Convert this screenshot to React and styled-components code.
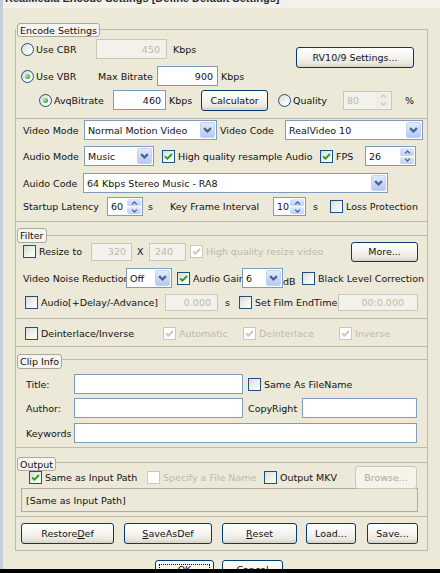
import styled, { createGlobalStyle, css } from "styled-components";

const LINE = "#bdbaa9";
const OFF_TEXT = "#bdbaaa";

const GlobalStyle = createGlobalStyle`
  html, body { margin: 0; padding: 0; background: #ece9d8; }
`;

const Window = styled.div`
  width: 440px;
  height: 573px;
  overflow: hidden;
  box-sizing: border-box;
  padding-left: 3px;
  background: linear-gradient(90deg, #c4cedb 0 3px, #ece9d8 3px);
  font-family: "DejaVu Sans", "Liberation Sans", sans-serif;
  font-size: 9.5px;
  color: #111;
`;

const TitleStrip = styled.div`
  height: 8px;
  overflow: hidden;
  padding-left: 2px;
  background: #f2f1ec;
`;

const TitleText = styled.div`
  margin-top: -8px;
  font-family: "Liberation Sans", Arial, sans-serif;
  font-weight: 700;
  font-size: 11px;
  line-height: 12px;
  color: #2b2b2b;
  white-space: nowrap;
`;

const Frame = styled.div`
  width: 413px;
  margin: 21px 0 0 12px;
  box-sizing: border-box;
  border: 1px solid ${LINE};
  border-top: none;
  display: flex;
  flex-direction: column;
`;

const Section = styled.div`
  display: flex;
  flex-direction: column;
  padding-bottom: ${(p) => p.$pb || 0}px;
  border-bottom: ${(p) => (p.$last ? "none" : `1px solid ${LINE}`)};
`;

const LegendRow = styled.div`
  display: flex;
  align-items: flex-start;
  margin-top: ${(p) => p.$mt}px;
`;

const LegendBox = styled.div`
  flex: none;
  height: ${(p) => p.$h || 15}px;
  box-sizing: border-box;
  margin-left: 1px;
  padding: 0 2px;
  display: flex;
  align-items: center;
  border: 1px solid #a9a89c;
  border-radius: 3px;
  background: #f5f4ef;
  white-space: nowrap;
`;

const Rule = styled.div`
  flex: 1;
  height: 1px;
  margin-top: ${(p) => p.$at}px;
  background: ${LINE};
`;

const Row = styled.div`
  display: flex;
  align-items: center;
  height: ${(p) => p.$h || 20}px;
  margin-top: ${(p) => p.$mt || 0}px;
  padding-left: ${(p) => p.$pl || 0}px;
`;

const RateBlock = styled.div`
  display: flex;
  align-items: flex-start;
  margin-top: 2px;
`;

const RateRows = styled.div`
  display: flex;
  flex-direction: column;
`;

const Label = styled.span`
  flex: none;
  width: ${(p) => (p.$w ? `${p.$w}px` : "auto")};
  margin-left: ${(p) => p.$ml || 0}px;
  white-space: nowrap;
  overflow: ${(p) => (p.$clip ? "hidden" : "visible")};
  color: ${(p) => (p.$off ? OFF_TEXT : "#111")};
  align-self: ${(p) => (p.$low ? "flex-end" : "auto")};
  padding-bottom: ${(p) => (p.$low ? 1 : 0)}px;
`;

const OptionWrap = styled.div`
  flex: none;
  display: flex;
  align-items: center;
  gap: 2px;
  width: ${(p) => (p.$w ? `${p.$w}px` : "auto")};
  margin-left: ${(p) => p.$ml || 0}px;
  overflow: ${(p) => (p.$clip ? "hidden" : "visible")};
`;

const RadioDot = styled.span`
  flex: none;
  position: relative;
  width: 13px;
  height: 13px;
  box-sizing: border-box;
  border-radius: 50%;
  border: 1px solid #1c5180;
  background: linear-gradient(135deg, #d8d8d2, #fbfbf9 75%);
  ${(p) =>
    p.$on &&
    css`
      &::after {
        content: "";
        position: absolute;
        left: 3px;
        top: 3px;
        width: 5px;
        height: 5px;
        border-radius: 50%;
        background: radial-gradient(circle at 35% 35%, #b6ecb6, #2ea82e 75%);
      }
    `}
`;

const CheckBox = styled.span`
  flex: none;
  width: 13px;
  height: 13px;
  box-sizing: border-box;
  border: 1px solid ${(p) => (p.$off ? "#cac8bb" : "#1c5180")};
  background: ${(p) =>
    p.$off ? "#fff" : "linear-gradient(135deg, #dcdcd7 0%, #f6f6f3 70%, #fff 100%)"};
  display: flex;
  align-items: center;
  justify-content: center;
`;

const TextBox = styled.div`
  flex: none;
  width: ${(p) => p.$w}px;
  height: ${(p) => p.$h || 20}px;
  margin-left: ${(p) => p.$ml || 0}px;
  box-sizing: border-box;
  border: 1px solid ${(p) => (p.$off ? "#c9c7ba" : "#7f9db9")};
  background: ${(p) => (p.$off ? "#f2f1eb" : "#fff")};
  color: ${(p) => (p.$off ? OFF_TEXT : "#111")};
  display: flex;
  align-items: center;
  justify-content: ${(p) => (p.$right ? "flex-end" : "flex-start")};
  padding: 0 ${(p) => (p.$pad != null ? p.$pad : 4)}px;
  white-space: nowrap;
  overflow: hidden;
`;

const SelectBox = styled.div`
  flex: none;
  width: ${(p) => p.$w}px;
  height: 20px;
  margin-left: ${(p) => p.$ml || 0}px;
  box-sizing: border-box;
  border: 1px solid #7f9db9;
  background: #fff;
  padding: 1px;
  display: flex;
`;

const SelectText = styled.span`
  flex: 1;
  padding-left: 2px;
  display: flex;
  align-items: center;
  white-space: nowrap;
  overflow: hidden;
`;

const DropBtn = styled.span`
  flex: none;
  width: 15px;
  box-sizing: border-box;
  border: 1px solid #c3d1f6;
  border-radius: 2px;
  background: linear-gradient(#e2eafe, #c6d6fb 60%, #b5c8f4);
  display: flex;
  align-items: center;
  justify-content: center;
`;

const SpinBox = styled.div`
  flex: none;
  width: ${(p) => p.$w}px;
  height: ${(p) => p.$h || 19}px;
  margin-left: ${(p) => p.$ml || 0}px;
  box-sizing: border-box;
  border: 1px solid ${(p) => (p.$off ? "#c9c7ba" : "#7f9db9")};
  background: ${(p) => (p.$off ? "#f2f1eb" : "#fff")};
  display: flex;
`;

const SpinValue = styled.span`
  flex: 1;
  padding-left: 3px;
  display: flex;
  align-items: center;
  color: ${(p) => (p.$off ? OFF_TEXT : "#111")};
`;

const SpinBtns = styled.span`
  flex: none;
  width: 14px;
  padding: 1px 1px 1px 0;
  display: flex;
  flex-direction: column;
  gap: 1px;
`;

const SpinBtn = styled.span`
  flex: 1;
  border-radius: 2px;
  background: ${(p) =>
    p.$off ? "#eeede6" : "linear-gradient(#dfe8fe, #bccff8)"};
  display: flex;
  align-items: center;
  justify-content: center;
`;

const Button = styled.div`
  flex: none;
  position: relative;
  width: ${(p) => p.$w}px;
  height: ${(p) => p.$h || 21}px;
  margin-left: ${(p) => (p.$auto ? "auto" : `${p.$ml || 0}px`)};
  margin-top: ${(p) => p.$mt || 0}px;
  margin-right: ${(p) => p.$mr || 0}px;
  box-sizing: border-box;
  border: 1px solid ${(p) => (p.$off ? "#c9c7ba" : "#003c74")};
  border-radius: 3px;
  background: ${(p) =>
    p.$off
      ? "#f5f4ea"
      : "linear-gradient(180deg, #ffffff 0%, #f6f5f0 45%, #ebe8de 80%, #d6d1c4 100%)"};
  color: ${(p) => (p.$off ? "#aca899" : "#111")};
  display: flex;
  align-items: center;
  justify-content: center;
  white-space: nowrap;
  ${(p) =>
    p.$focus &&
    css`
      &::after {
        content: "";
        position: absolute;
        inset: 3px;
        border: 1px dotted #000;
      }
    `}
`;

const PathBox = styled.div`
  width: 397px;
  height: 24px;
  margin: -1px 0 0 5px;
  box-sizing: border-box;
  border: 1px solid #aeaca0;
  padding-left: 4px;
  display: flex;
  align-items: center;
`;

const DialogButtons = styled.div`
  display: flex;
  height: 9px;
  overflow: hidden;
  margin-top: 9px;
  padding-left: 152px;
`;

const BlackBar = styled.div`
  height: 4px;
  margin-left: -3px;
  background: #000;
`;

const Tick = ({ color }) => (
  <svg width="9" height="9" viewBox="0 0 9 9">
    <path d="M1 4.3 L3.4 6.7 L8 2" fill="none" stroke={color} strokeWidth="1.9" />
  </svg>
);

const Chevron = ({ up, color = "#4d6185", w = 8, h = 5, sw = 1.8 }) => (
  <svg width={w} height={h} viewBox="0 0 8 5">
    <path
      d={up ? "M1 4.2 L4 1.2 L7 4.2" : "M1 0.8 L4 3.8 L7 0.8"}
      fill="none"
      stroke={color}
      strokeWidth={sw}
    />
  </svg>
);

function Radio({ w, ml, on, children }) {
  return (
    <OptionWrap $w={w} $ml={ml}>
      <RadioDot $on={on} />
      <Label>{children}</Label>
    </OptionWrap>
  );
}

function Check({ w, ml, on, off, clip, children }) {
  return (
    <OptionWrap $w={w} $ml={ml} $clip={clip}>
      <CheckBox $off={off}>{on && <Tick color={off ? "#cac8bb" : "#21a121"} />}</CheckBox>
      <Label $off={off} $ml={1}>
        {children}
      </Label>
    </OptionWrap>
  );
}

function Select({ w, ml, children }) {
  return (
    <SelectBox $w={w} $ml={ml}>
      <SelectText>{children}</SelectText>
      <DropBtn>
        <Chevron w={9} h={6} sw={2} />
      </DropBtn>
    </SelectBox>
  );
}

function Spin({ w, ml, h, off, children }) {
  const c = off ? "#c9c8c0" : "#4d6185";
  return (
    <SpinBox $w={w} $ml={ml} $h={h} $off={off}>
      <SpinValue $off={off}>{children}</SpinValue>
      <SpinBtns>
        <SpinBtn $off={off}>
          <Chevron up color={c} w={7} h={4} sw={1.6} />
        </SpinBtn>
        <SpinBtn $off={off}>
          <Chevron color={c} w={7} h={4} sw={1.6} />
        </SpinBtn>
      </SpinBtns>
    </SpinBox>
  );
}

export default function App() {
  return (
    <>
      <GlobalStyle />
      <Window>
        <TitleStrip>
          <TitleText>RealMedia Encode Settings [Define Default Settings]</TitleText>
        </TitleStrip>
        <Frame>
          <Section $pb={8}>
            <LegendRow $mt={-6}>
              <LegendBox $h={14}>Encode Settings</LegendBox>
              <Rule $at={6} />
            </LegendRow>
            <RateBlock>
              <RateRows>
                <Row $pl={5}>
                  <Radio w={75}>Use CBR</Radio>
                  <TextBox $w={71} $off $right $pad={6}>450</TextBox>
                  <Label $ml={6}>Kbps</Label>
                </Row>
                <Row $pl={5} $mt={7}>
                  <Radio w={77} on>
                    Use VBR
                  </Radio>
                  <Label $w={59}>Max Bitrate</Label>
                  <TextBox $w={61} $right>900</TextBox>
                  <Label $ml={3}>Kbps</Label>
                </Row>
              </RateRows>
              <Button $w={118} $auto $mt={8} $mr={13}>
                RV10/9 Settings...
              </Button>
            </RateBlock>
            <Row $pl={23} $mt={4}>
              <Radio w={74} on>
                AvqBitrate
              </Radio>
              <TextBox $w={53} $right>460</TextBox>
              <Label $ml={3} $w={32}>Kbps</Label>
              <Button $w={67}>Calculator</Button>
              <Radio w={65} ml={10}>
                Quality
              </Radio>
              <Spin w={49} off>
                80
              </Spin>
              <Label $ml={13}>%</Label>
            </Row>
          </Section>

          <Section $pb={5}>
            <Row $pl={7} $mt={1}>
              <Label $w={61}>Video Mode</Label>
              <Select w={133}>Normal Motion Video</Select>
              <Label $ml={3} $w={65}>Video Code</Label>
              <Select w={138}>RealVideo 10</Select>
            </Row>
            <Row $pl={7} $mt={6}>
              <Label $w={61}>Audio Mode</Label>
              <Select w={70}>Music</Select>
              <Check w={158} ml={8} on>
                High quality resample Audio
              </Check>
              <Check w={45} on>
                FPS
              </Check>
              <Spin w={51} h={20}>
                26
              </Spin>
            </Row>
            <Row $pl={7} $mt={7}>
              <Label $w={60}>Auido Code</Label>
              <Select w={305}>64 Kbps Stereo Music - RA8</Select>
            </Row>
            <Row $pl={7} $mt={4} $h={19}>
              <Label $w={84}>Startup Latency</Label>
              <Spin w={36}>60</Spin>
              <Label $ml={5} $w={22}>
                s
              </Label>
              <Label $w={103}>Key Frame Interval</Label>
              <Spin w={33}>10</Spin>
              <Label $ml={7} $w={17}>
                s
              </Label>
              <Check>Loss Protection</Check>
            </Row>
          </Section>

          <Section $pb={7}>
            <LegendRow $mt={6}>
              <LegendBox>Filter</LegendBox>
              <Rule $at={7} />
            </LegendRow>
            <Row $pl={7} $mt={-2} $h={21}>
              <Check w={68}>Resize to</Check>
              <TextBox $w={41} $h={18} $off $right $pad={5}>
                320
              </TextBox>
              <Label $ml={5} $w={12}>
                X
              </Label>
              <TextBox $w={37} $h={18} $off $pad={5}>
                240
              </TextBox>
              <Check w={161} ml={4} on off>
                High quality resize video
              </Check>
              <Button $w={67} $h={20}>
                More...
              </Button>
            </Row>
            <Row $pl={7} $mt={6}>
              <Label $w={103} $clip>
                Video Noise Reduction
              </Label>
              <Select w={46}>Off</Select>
              <Check w={65} ml={5} on clip>
                Audio Gain
              </Check>
              <Select w={41}>6</Select>
              <Label $w={19} $low>
                dB
              </Label>
              <Check>Black Level Correction</Check>
            </Row>
            <Row $pl={9} $mt={5} $h={18}>
              <Check w={140}>Audio[+Delay/-Advance]</Check>
              <TextBox $w={53} $h={17} $off $right $pad={6}>
                0.000
              </TextBox>
              <Label $ml={7} $w={14}>
                s
              </Label>
              <Check w={99}>Set Film EndTime</Check>
              <TextBox $w={80} $h={17} $off $right $pad={13}>
                00:0.000
              </TextBox>
            </Row>
          </Section>

          <Section $pb={3}>
            <Row $pl={9} $mt={4}>
              <Check w={138}>Deinterlace/Inverse</Check>
              <Check w={80} on off>
                Automatic
              </Check>
              <Check w={96} on off>
                Deinterlace
              </Check>
              <Check on off>
                Inverse
              </Check>
            </Row>
          </Section>

          <Section $pb={4}>
            <LegendRow $mt={7}>
              <LegendBox>Clip Info</LegendBox>
              <Rule $at={5} />
            </LegendRow>
            <Row $pl={10} $mt={5}>
              <Label $w={48}>Title:</Label>
              <TextBox $w={169} />
              <Check ml={5}>Same As FileName</Check>
            </Row>
            <Row $pl={10} $mt={4}>
              <Label $w={48}>Author:</Label>
              <TextBox $w={169} />
              <Label $ml={5} $w={54}>
                CopyRight
              </Label>
              <TextBox $w={115} />
            </Row>
            <Row $pl={10} $mt={5}>
              <Label $w={48}>Keywords</Label>
              <TextBox $w={343} />
            </Row>
          </Section>

          <Section $pb={4}>
            <LegendRow $mt={9}>
              <LegendBox $h={14}>Output</LegendBox>
              <Rule $at={5} />
            </LegendRow>
            <Row $pl={13} $mt={-5} $h={23}>
              <Check w={118} on>
                Same as Input Path
              </Check>
              <Check w={117} off>
                Specify a File Name
              </Check>
              <Check w={91}>Output MKV</Check>
              <Button $w={62} $h={23} $off>
                Browse...
              </Button>
            </Row>
            <PathBox>[Same as Input Path]</PathBox>
          </Section>

          <Section $pb={6} $last>
            <Row $pl={5} $mt={6} $h={21}>
              <Button $w={93}>
                Restore<u>D</u>ef
              </Button>
              <Button $w={88} $ml={10}>
                <u>S</u>aveAsDef
              </Button>
              <Button $w={75} $ml={10}>
                <u>R</u>eset
              </Button>
              <Button $w={50} $ml={9}>
                Load...
              </Button>
              <Button $w={51} $ml={11}>
                Save...
              </Button>
            </Row>
          </Section>
        </Frame>
        <DialogButtons>
          <Button $w={59} $h={18} $focus>
            OK
          </Button>
          <Button $w={61} $h={18} $ml={8}>
            Cancel
          </Button>
        </DialogButtons>
        <BlackBar />
      </Window>
    </>
  );
}
